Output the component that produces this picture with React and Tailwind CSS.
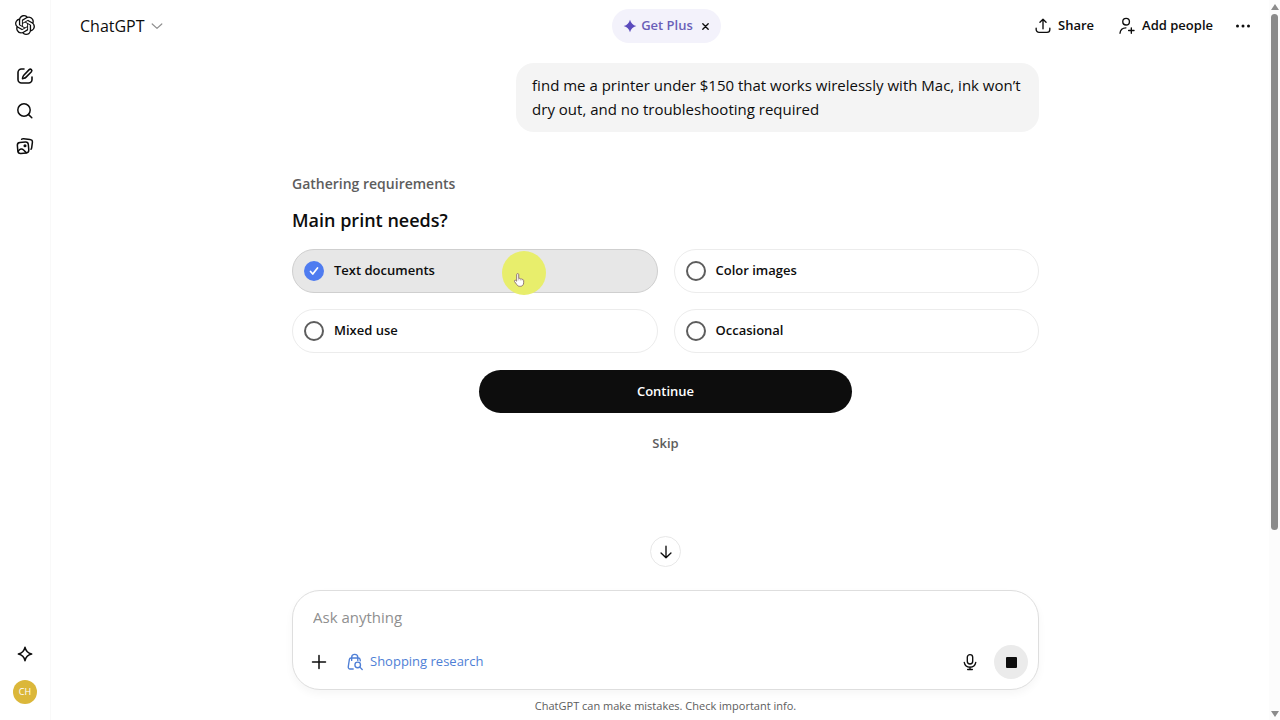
import { useState } from 'react';
import { SiOpenai } from 'react-icons/si';

const options = [
  { id: 'text', label: 'Text documents' },
  { id: 'color', label: 'Color images' },
  { id: 'mixed', label: 'Mixed use' },
  { id: 'occasional', label: 'Occasional' },
];

const Icon = ({ children, className = 'size-5', strokeWidth = 1.5 }) => (
  <svg
    viewBox="0 0 20 20"
    className={className}
    fill="none"
    stroke="currentColor"
    strokeWidth={strokeWidth}
    strokeLinecap="round"
    strokeLinejoin="round"
    aria-hidden="true"
  >
    {children}
  </svg>
);

const Sidebar = () => (
  <aside className="flex w-[51px] shrink-0 flex-col items-center border-r border-[#f9f9f9] pt-[15px] pb-4">
    <a href="#home" aria-label="ChatGPT home" className="mb-[31px]">
      <SiOpenai className="size-5" />
    </a>
    <nav className="flex flex-col gap-[15px]">
      <button type="button" aria-label="New chat">
        <Icon strokeWidth={1.6}>
          <path d="M9 3H6.5A3.5 3.5 0 0 0 3 6.5v7A3.5 3.5 0 0 0 6.5 17h7a3.5 3.5 0 0 0 3.5-3.5V11" />
          <path d="M14.200 3.600a1.560 1.560 0 0 1 2.200 2.200l-5.300 5.300c-.6.600-1.300 1-2.100 1.200l-1.500.3.300-1.500c.2-.8.600-1.500 1.200-2.100z" />
        </Icon>
      </button>
      <button type="button" aria-label="Search chats">
        <Icon>
          <circle cx="9" cy="9" r="6.2" />
          <path d="M13.600 13.600 16.800 16.800" />
        </Icon>
      </button>
      <button type="button" aria-label="Library">
        <Icon>
          <rect x="2.6" y="6.2" width="11" height="11" rx="2.8" transform="rotate(-5 8 12)" />
          <path d="M6.600 3.300c.5-.5 1.200-.7 2-.6l6.300.7c1.800.2 2.700 1.300 2.500 3l-.7 5.200c-.1.800-.3 1.300-.7 1.700" />
          <path d="M3.200 15.200c1.800-2.500 3.800-2.700 5.400-1.200l2.600 2.600" />
          <circle cx="10" cy="9.800" r=".8" fill="currentColor" />
        </Icon>
      </button>
    </nav>
    <button type="button" aria-label="Upgrade plan" className="mt-auto">
      <Icon strokeWidth={1.6}>
        <path d="M10 3.400c.8 3.700 2.400 5.600 6.600 6.600-4.200 1-5.800 2.900-6.600 6.600-.8-3.700-2.400-5.600-6.600-6.600 4.200-1 5.800-2.900 6.600-6.600z" />
      </Icon>
    </button>
    <button
      type="button"
      aria-label="Account"
      className="mt-4 flex size-6 items-center justify-center rounded-full bg-[#dbb73a] text-[9px] text-white"
    >
      CH
    </button>
  </aside>
);

const Header = () => (
  <header className="grid h-[52px] grid-cols-[1fr_auto_1fr] items-center pr-[27px] pl-[29px]">
    <button type="button" className="flex items-center gap-1 justify-self-start text-base text-[#0d0d0d]">
      ChatGPT
      <Icon className="size-4 text-[#8f8f8f]">
        <path d="m4 7.500 6 5.500 6-5.500" />
      </Icon>
    </button>
    <div className="flex h-[34px] items-center gap-2 rounded-full bg-[#f3f2fb] px-[11px]">
      <button type="button" className="flex items-center gap-1 text-[13px] font-semibold text-[#6a5fb8]">
        <svg viewBox="0 0 20 20" className="size-[14px]" fill="#5b4bbd" aria-hidden="true">
          <path d="M10 1c1.400 5 4 7.600 9 9-5 1.400-7.600 4-9 9-1.400-5-4-7.600-9-9 5-1.400 7.600-4 9-9z" />
        </svg>
        Get Plus
      </button>
      <button type="button" aria-label="Dismiss">
        <Icon className="size-[9px]" strokeWidth={3}>
          <path d="m4 4 12 12M16 4 4 16" />
        </Icon>
      </button>
    </div>
    <div className="flex items-center justify-self-end text-[13px] font-semibold text-[#0d0d0d]">
      <button type="button" className="flex items-center gap-[6px]">
        <Icon className="size-[18px]">
          <path d="M10 13V2.500M6.600 5.800 10 2.500l3.400 3.300M2.400 12.500v1.300a3.200 3.200 0 0 0 3.200 3.200h8.800a3.200 3.200 0 0 0 3.200-3.200v-1.300" />
        </Icon>
        Share
      </button>
      <button type="button" className="ml-6 flex items-center gap-[6px]">
        <Icon className="size-[18px]">
          <circle cx="9" cy="5.2" r="3.700" />
          <path d="M2.200 18c.4-3.800 2.700-6 6.600-6M14.800 12v6M11.800 15h6" />
        </Icon>
        Add people
      </button>
      <button type="button" aria-label="More options" className="ml-5">
        <svg viewBox="0 0 20 20" className="size-5" fill="currentColor" aria-hidden="true">
          <circle cx="4.500" cy="10" r="1.500" />
          <circle cx="10" cy="10" r="1.500" />
          <circle cx="15.500" cy="10" r="1.500" />
        </svg>
      </button>
    </div>
  </header>
);

// Yellow click highlight with the hand pointer on top
const Pointer = () => (
  <span className="pointer-events-none absolute top-[1px] left-[209px] size-11 rounded-full bg-[#e8ee6c]">
    <svg viewBox="0 0 24 30" className="absolute top-[22px] left-[11px] h-[14px] w-3" aria-hidden="true">
      <path
        d="M7 3.500a2.200 2.200 0 0 1 4.400 0V12c1-.9 3.200-.6 3.700.8 1.200-.8 3-.4 3.500 1 1.600-.4 3.400.5 3.400 2.700V21c0 4.500-3 7.500-7 7.500h-1.500c-3 0-4.800-1.300-6.200-3.600L2.500 18.500c-1.300-2.200 1-4 2.800-2.500L7 17.600z"
        fill="#fff"
        stroke="#8a7070"
        strokeWidth="2"
        strokeLinejoin="round"
      />
      <path d="M11.400 12v4M15.100 13v3M18.600 14v2.500" stroke="#a39090" strokeWidth="1.2" />
    </svg>
  </span>
);

const Option = ({ option, checked, onToggle }) => (
  <label
    htmlFor={option.id}
    className={`relative flex h-11 cursor-pointer items-center gap-[10px] rounded-full border px-[11px] text-[13px] font-semibold text-[#0d0d0d] ${
      checked ? 'border-[#cfcfcf] bg-[#e7e7e7]' : 'border-[#ececec] bg-white'
    }`}
  >
    <span className="grid size-5 place-items-center">
      <input
        id={option.id}
        type="checkbox"
        checked={checked}
        onChange={() => onToggle(option.id)}
        className="col-start-1 row-start-1 size-5 appearance-none rounded-full border-2 border-[#5d5d5d] checked:border-[#4f7cf0] checked:bg-[#4f7cf0]"
      />
      {checked && (
        <Icon className="pointer-events-none col-start-1 row-start-1 size-[10px] text-white" strokeWidth={3.5}>
          <path d="m3 11 4.500 5L17 4" />
        </Icon>
      )}
    </span>
    {option.label}
    {option.id === 'text' && <Pointer />}
  </label>
);

const Composer = () => (
  <form
    onSubmit={(e) => e.preventDefault()}
    className="flex h-[100px] flex-col justify-between rounded-[28px] border border-[#dedede] bg-white pt-[14px] pr-[10px] pb-[10px] pl-4 shadow-[0_4px_8px_rgba(0,0,0,0.04)]"
  >
    <input
      type="text"
      aria-label="Message"
      placeholder="Ask anything"
      className="h-6 w-full px-1 text-[15px] outline-none placeholder:text-[#8f8f8f]"
    />
    <div className="flex h-[34px] items-center">
      <button type="button" aria-label="Add files">
        <Icon>
          <path d="M10 3.500v13M3.500 10h13" />
        </Icon>
      </button>
      <button type="button" className="ml-[17px] flex items-center gap-[6px] text-[13px] text-[#4f7fd6]">
        <Icon className="size-[18px]">
          <path d="M8 17.800H4.500a2 2 0 0 1-2-2.300l1.200-8.200a2 2 0 0 1 2-1.700h8a2 2 0 0 1 2 1.700l.2 1.400" />
          <path d="M6.300 8.200V5a3.400 3.400 0 0 1 6.800 0v3.200" />
          <circle cx="13" cy="13.300" r="3.100" />
          <path d="m15.400 15.700 2.600 2.600" />
        </Icon>
        Shopping research
      </button>
      <button type="button" aria-label="Dictate" className="ml-auto">
        <Icon className="size-[18px]">
          <rect x="7" y="1.800" width="6" height="10.400" rx="3" />
          <path d="M3.600 10.500a6.500 6.500 0 0 0 12.800 0M10 15.600v2.600M7.400 18.300h5.200" />
        </Icon>
      </button>
      <button
        type="submit"
        aria-label="Stop"
        className="ml-[15px] flex size-[34px] items-center justify-center rounded-full bg-[#ebebeb]"
      >
        <span className="size-[11px] rounded-[1px] bg-[#0d0d0d]" />
      </button>
    </div>
  </form>
);

const Scrollbar = () => (
  <div className="absolute inset-y-0 right-0 flex w-[11px] flex-col items-center bg-[#fcfcfc] pt-1 pb-[3px]" aria-hidden="true">
    <svg viewBox="0 0 8 6" className="h-[6px] w-2" fill="#8b8b8b">
      <path d="M4 0 8 6H0z" />
    </svg>
    <div className="mt-1 flex-1">
      <div className="h-[74%] w-[7px] rounded-full bg-[#8b8b8b]" />
    </div>
    <svg viewBox="0 0 8 6" className="h-[6px] w-2" fill="#8b8b8b">
      <path d="M4 6 0 0h8z" />
    </svg>
  </div>
);

const App = () => {
  const [selected, setSelected] = useState(['text']);

  const toggle = (id) => {
    setSelected((prev) =>
      prev.includes(id) ? prev.filter((item) => item !== id) : [...prev, id]
    );
  };

  return (
    <div className="relative flex min-h-screen bg-white font-['Open_Sans','Noto_Sans',sans-serif] text-[#0d0d0d]">
      <Sidebar />
      <div className="flex min-w-0 flex-1 flex-col">
        <Header />
        <main className="mx-auto flex w-full max-w-[747px] flex-1 flex-col pt-[11px]">
          <p className="w-[70%] self-end rounded-[18px] bg-[#f4f4f4] px-4 pt-[10px] pb-[11px] text-[15px] leading-6">
            find me a printer under $150 that works wirelessly with Mac, ink won’t dry out, and no
            troubleshooting required
          </p>

          <section className="mt-10 flex flex-col">
            <p className="text-sm leading-6 font-semibold text-[#5d5d5d]">Gathering requirements</p>
            <h1 className="mt-3 text-lg leading-6 font-semibold">Main print needs?</h1>
            <div className="mt-[17px] grid grid-cols-2 gap-4">
              {options.map((option) => (
                <Option
                  key={option.id}
                  option={option}
                  checked={selected.includes(option.id)}
                  onToggle={toggle}
                />
              ))}
            </div>
            <button
              type="button"
              className="mt-[17px] h-[43px] w-1/2 self-center rounded-full bg-[#0d0d0d] text-[13px] font-semibold text-white"
            >
              Continue
            </button>
            <button type="button" className="mt-5 self-center text-[13px] leading-5 font-semibold text-[#5d5d5d]">
              Skip
            </button>
          </section>

          <div className="mt-auto flex flex-col pt-6">
            <button
              type="button"
              aria-label="Scroll to bottom"
              className="mb-[23px] flex size-[31px] items-center justify-center self-center rounded-full border border-[#e8e8e8] bg-white"
            >
              <Icon className="size-[18px]">
                <path d="M10 3.500v13M4.500 11l5.500 5.500 5.500-5.500" />
              </Icon>
            </button>
            <Composer />
            <p className="pt-2 pb-[6px] text-center text-[11px] leading-4 text-[#5d5d5d]">
              ChatGPT can make mistakes. Check important info.
            </p>
          </div>
        </main>
      </div>
      <Scrollbar />
    </div>
  );
};

export default App;
